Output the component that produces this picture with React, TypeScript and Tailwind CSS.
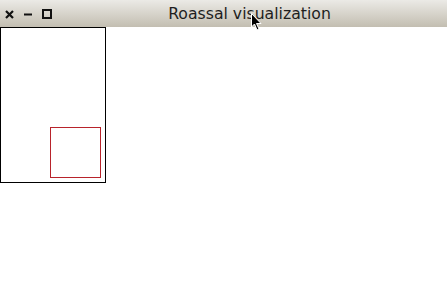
export default function App() {
  return (
    <div className="w-[447px] h-[300px] bg-white relative overflow-hidden" style={{ fontFamily: '"DejaVu Sans", sans-serif' }}>
      <div className="h-[27px] w-full bg-gradient-to-b from-[#ebeae6] to-[#c3beb1] flex items-center relative">
        <div className="flex items-center pl-[5px] gap-0">
          <svg width="9" height="9" viewBox="0 0 9 9" className="mt-[1px]">
            <path d="M1 1 L8 8 M8 1 L1 8" stroke="#111" strokeWidth="2.2" />
          </svg>
          <svg width="9" height="9" viewBox="0 0 9 9" className="ml-[10px] mt-[1px]">
            <path d="M0 4.5 H8" stroke="#111" strokeWidth="2" />
          </svg>
          <svg width="10" height="10" viewBox="0 0 10 10" className="ml-[9px]">
            <rect x="1" y="1" width="8" height="8" fill="none" stroke="#111" strokeWidth="2" />
          </svg>
        </div>
        <div className="absolute left-0 right-0 top-0 h-[27px] flex items-center justify-center text-[15.7px] text-[#1e1e1e] pl-[52px]">
          Roassal visualization
        </div>
        <svg width="12" height="19" viewBox="0 0 12 19" className="absolute left-[251px] top-[13px]">
          <path d="M0.5 0.5 L0.5 14 L3.5 11 L6 17 L8 16 L5.5 10.5 L10 10.5 Z" fill="#000" stroke="#fff" strokeWidth="1" />
        </svg>
      </div>
      <div className="w-[106px] h-[156px] border border-black">
        <div className="ml-[49px] mt-[99px] w-[51px] h-[51px] border border-[#b8232b]" />
      </div>
    </div>
  );
}
